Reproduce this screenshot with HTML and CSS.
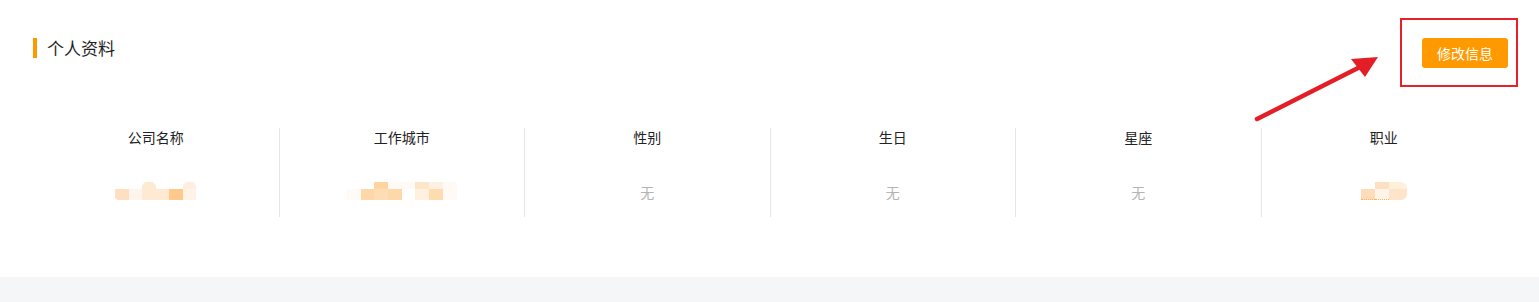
FILE: index.html
```html
<!DOCTYPE html>
<html lang="zh-CN">
<head>
<meta charset="utf-8">
<title>个人资料</title>
<link rel="stylesheet" href="styles.css">
</head>
<body>
<div class="card">
  <div class="header">
    <div class="title"><span class="bar"></span><span class="title-text">个人资料</span></div>
    <button class="edit-btn">修改信息</button>
  </div>
  <div class="info-row">
    <div class="col">
      <div class="label">公司名称</div>
      <div class="value">
        <div class="mosaic m-company">
          <i class="e"></i><i class="e"></i><i class="a1 rt"></i><i class="e"></i><i class="e"></i><i class="a2 rt"></i>
          <i class="a3 rl"></i><i class="a4"></i><i class="a1"></i><i class="a1"></i><i class="a5"></i><i class="a6"></i>
        </div>
      </div>
    </div>
    <div class="col">
      <div class="label">工作城市</div>
      <div class="value">
        <div class="mosaic m-city">
          <i class="e"></i><i class="e"></i><i class="b1"></i><i class="b0"></i><i class="b0"></i><i class="b2"></i><i class="b3"></i><i class="b0"></i>
          <i class="b0"></i><i class="b4"></i><i class="b5"></i><i class="b4"></i><i class="e"></i><i class="b6"></i><i class="b7"></i><i class="b0"></i>
        </div>
      </div>
    </div>
    <div class="col">
      <div class="label">性别</div>
      <div class="value none">无</div>
    </div>
    <div class="col">
      <div class="label">生日</div>
      <div class="value none">无</div>
    </div>
    <div class="col">
      <div class="label">星座</div>
      <div class="value none">无</div>
    </div>
    <div class="col">
      <div class="label">职业</div>
      <div class="value">
        <div class="mosaic m-job">
          <i class="e"></i><i class="c1"></i><i class="c2 rtr"></i>
          <i class="c3 dot"></i><i class="c4 dot"></i><i class="c5 rbr"></i>
        </div>
      </div>
    </div>
  </div>

  <div class="annot-box"></div>
  <svg class="annot-arrow" width="140" height="80" viewBox="0 0 140 80" xmlns="http://www.w3.org/2000/svg">
    <line x1="7" y1="69" x2="112" y2="16" stroke="#e31e27" stroke-width="4.5" stroke-linecap="round"/>
    <polygon points="128,7 101,9 115,27" fill="#e31e27"/>
  </svg>
</div>
<div class="footer"></div>
</body>
</html>
```
FILE: styles.css
```css
html, body {
  margin: 0;
  padding: 0;
}
body {
  background: #f5f6f8;
  font-family: "Noto Sans CJK SC", "Noto Sans", "Liberation Sans", sans-serif;
  color: #333;
}
.card {
  position: relative;
  background: #fff;
  height: 277px;
  padding: 0 31px 0 33px;
  box-sizing: border-box;
}
.header {
  display: flex;
  justify-content: space-between;
  align-items: flex-start;
  padding-top: 38px;
}
.title {
  display: flex;
  align-items: center;
  height: 20px;
}
.bar {
  width: 4px;
  height: 20px;
  background: #ff9900;
}
.title-text {
  margin-left: 10px;
  font-size: 17px;
  line-height: 20px;
  color: #1f1f1f;
}
.edit-btn {
  width: 86px;
  height: 30px;
  border: none;
  border-radius: 3px;
  background: #ff9900;
  color: #fff;
  font-family: inherit;
  font-size: 14px;
  padding: 0;
  cursor: pointer;
}
.info-row {
  display: grid;
  grid-template-columns: repeat(6, 1fr);
  margin-top: 60px;
  margin-right: 2px;
}
.col {
  height: 89px;
  display: flex;
  flex-direction: column;
  align-items: center;
}
.col + .col {
  border-left: 1px solid #e6e6e6;
}
.label {
  font-size: 14px;
  line-height: 18px;
  color: #222;
}
.value {
  margin-top: 36px;
  height: 20px;
  font-size: 14px;
  line-height: 20px;
  display: flex;
  align-items: center;
}
.none {
  color: #b3b3b3;
}
.mosaic {
  display: grid;
  grid-template-rows: 7px 11px;
  transform: translateY(-1px);
}
.mosaic i {
  display: block;
}
.m-company {
  grid-template-columns: repeat(6, 13.5px);
}
.m-city {
  grid-template-columns: repeat(8, 13.7px);
}
.m-job {
  grid-template-columns: 14px 14px 18px;
}
.e { background: transparent; }
.a1 { background: #fee9d3; }
.a2 { background: #fdeede; }
.a3 { background: #fee0c1; }
.a4 { background: #fff5ec; }
.a5 { background: #fec98b; }
.a6 { background: #fff3e8; }
.b0 { background: #fffaf5; }
.b1 { background: #fed49f; }
.b2 { background: #fde5c8; }
.b3 { background: #fef1e3; }
.b4 { background: #fed8a9; }
.b5 { background: #fedcb5; }
.b6 { background: #fff0df; }
.b7 { background: #fedcb0; }
.c1 { background: #fedfc1; }
.c2 { background: #fff0dc; }
.c3 { background: #fedcb8; }
.c4 { background: #fff4ea; }
.c5 { background: #fee4c9; }
.rt { border-radius: 5px 5px 0 0; }
.rl { border-radius: 0 0 0 4px; }
.rtr { border-radius: 0 6px 0 0; }
.rbr { border-radius: 0 0 6px 0; }
.dot { border-bottom: 1px dotted #ffb24d; box-sizing: border-box; }
.annot-box {
  position: absolute;
  left: 1400px;
  top: 18px;
  width: 114px;
  height: 65px;
  border: 2px solid #e8202a;
}
.annot-arrow {
  position: absolute;
  left: 1250px;
  top: 50px;
}
.footer {
  height: 25px;
  background: #f5f6f8;
}
```
